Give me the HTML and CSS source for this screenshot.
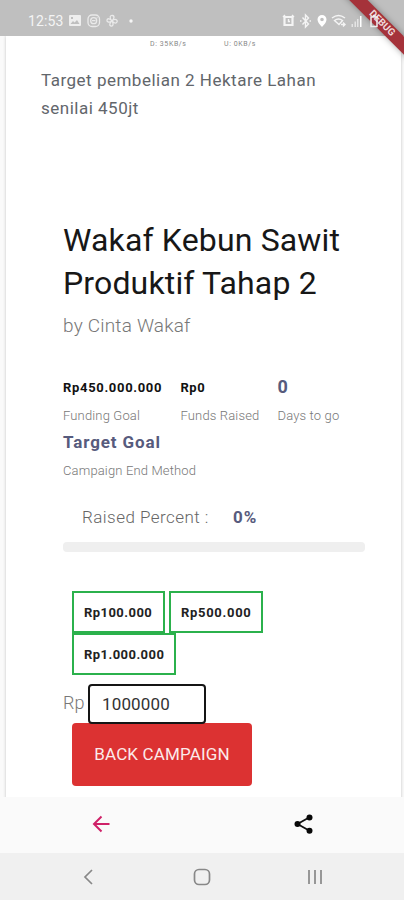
FILE: index.html
```html
<!DOCTYPE html>
<html lang="id">
<head>
<meta charset="utf-8">
<title>Wakaf Kebun Sawit Produktif Tahap 2</title>
<link rel="stylesheet" href="styles.css">
</head>
<body>
<div class="phone">
  <header class="status">
    <span class="clock">12:53</span>
    <svg class="status-left" width="72" height="16" viewBox="0 0 72 16">
      <path fill="#eee" fill-rule="evenodd" d="M2 2h10q1 0 1 1v9q0 1-1 1H2q-1 0-1-1V3q0-1 1-1zm.5 9h9L9 7l-2.500 2.500L5 8zM3 4v2h2V4z"/>
      <g fill="none" stroke="#eaeaea" stroke-width="1.300">
        <rect x="20" y="2" width="11.500" height="11.500" rx="4"/><circle cx="25.700" cy="7.700" r="3"/><path d="M24 7.700h3.500M28.700 4.500h.8"/>
        <path d="M44 8c-3-3-2-6 .5-5.500S46 6 44 8c3-3 6-1 5 1s-3 1-5-1c2 3 1 5.500-1 5s-1.500-3 1-5c-3 2-5.500 1-5-1s3-1.500 5 1"/>
      </g>
      <circle cx="63" cy="8" r="1.700" fill="#f6f6f6"/>
    </svg>
    <svg class="status-right" width="104" height="16" viewBox="0 0 104 16">
      <g fill="none" stroke="#f4f4f4" stroke-width="1.400">
        <path stroke-width="2.200" d="M3.500 4h8v8h-8z"/><path d="M2 4l2-2M13 4l-2-2M7.500 6v2.500H9"/>
        <path d="M21.500 4.500l6 6.500-3 3V2l3 3-6 6.500M19 8h1.500M28.500 8h1.500"/>
        <path d="M51 5q6.500-5 13 0M53.500 7.500q4-3 8 0l-3.500 4zM60 11.500h4M62 9.500l2 2-2 2"/>
      </g>
      <path fill="#fff" fill-rule="evenodd" d="M41 2a4.500 4.500 0 0 0-4.500 4.500Q36.500 9.500 41 14q4.500-4.500 4.500-7.500A4.500 4.500 0 0 0 41 2zm0 2.700a1.800 1.800 0 1 1 0 3.600 1.800 1.800 0 0 1 0-3.600z"/>
      <path fill="#e4e4e4" d="M70.500 11H72v3h-1.500zM73.500 8.500H75V14h-1.500zM76 6h1.500v8H76z"/><path fill="#fff" d="M79 3h1.500v11H79z"/>
      <path fill="none" stroke="#eee" stroke-width="1.500" d="M90 4h6v9.500h-6zM92 2.500h2.500"/>
    </svg>
    <div class="debug">DEBUG</div>
  </header>
  <main class="page">
    <article class="card">
      <div class="speeds"><span class="speed">D: 35KB/s</span><span class="speed up">U: 0KB/s</span></div>
      <p class="target"><span class="t1">Target pembelian 2 Hektare Lahan</span><br><span class="t2">senilai 450jt</span></p>
      <section class="campaign">
        <h1>Wakaf Kebun Sawit<br>Produktif Tahap 2</h1>
        <p class="by">by Cinta Wakaf</p>
        <div class="stats">
          <div class="stat"><b class="money goal">Rp450.000.000</b><span class="label">Funding Goal</span></div>
          <div class="stat"><b class="money">Rp0</b><span class="label">Funds Raised</span></div>
          <div class="stat"><b class="big zero">0</b><span class="label">Days to go</span></div>
          <div class="stat wide"><b class="big">Target Goal</b><span class="label">Campaign End Method</span></div>
        </div>
        <div class="raised"><span class="rp">Raised Percent :</span><b>0%</b></div>
        <div class="track"></div>
        <div class="amounts">
          <button class="a1">Rp100.000</button><button class="a2">Rp500.000</button><button class="a3">Rp1.000.000</button>
        </div>
        <div class="entry"><span>Rp</span><div class="field">1000000</div></div>
        <button class="back">BACK CAMPAIGN</button>
      </section>
    </article>
  </main>
  <nav class="tools">
    <svg width="20" height="20" viewBox="0 0 20 20"><path d="M18.500 10h-15M10.500 2.500L3 10l7.500 7.500" fill="none" stroke="#cf2168" stroke-width="2"/></svg>
    <svg width="20" height="20" viewBox="0 0 20 20"><path d="M16.500 3.200L4.500 10l12 6.800" fill="none" stroke="#111" stroke-width="1.800"/><g fill="#080808"><circle cx="4.500" cy="10" r="3"/><circle cx="16.500" cy="3.500" r="3"/><circle cx="16.500" cy="16.700" r="3"/></g></svg>
  </nav>
  <nav class="system">
    <svg width="18" height="18" viewBox="0 0 18 18"><path d="M12 2L5 9l7 7"/></svg>
    <svg width="18" height="18" viewBox="0 0 18 18"><rect x="1.500" y="1.500" width="15" height="15" rx="4.500"/></svg>
    <svg width="18" height="18" viewBox="0 0 18 18"><path d="M3 2v14M9 2v14M15 2v14"/></svg>
  </nav>
</div>
</body>
</html>
```
FILE: styles.css
```css
* { box-sizing: border-box; }
body { margin: 0; font-family: Roboto, sans-serif; background: #fff; }
h1, p { margin: 0; font-weight: 400; }
.phone { width: 404px; height: 900px; overflow: hidden; display: flex; flex-direction: column; }
.status { position: relative; flex: none; height: 36px; background: #bfbfbf; display: flex; align-items: center; padding: 6px 0 0 28px; z-index: 2; }
.clock { color: #f4f4f4; font-size: 14px; width: 40px; letter-spacing: 0.1px; }
.status-left { display: block; flex: none; }
.status-right { display: block; flex: none; margin-left: 141px; position: relative; z-index: 1; }
.debug { position: absolute; left: 332px; top: 17px; width: 100px; height: 12.500px; transform: rotate(45deg); background: #a5323a; box-shadow: 0 0 6px rgba(0,0,0,.35); color: #f0dada; font-size: 10px; font-weight: 700; line-height: 12.500px; text-align: center; }
.page { flex: none; height: 761px; overflow: hidden; background: #fafafa; padding: 0 3px 0 6px; }
.card { height: 780px; background: #fff; box-shadow: 0 0 3px rgba(0,0,0,.22); padding-left: 35px; }
.speeds { display: flex; padding-left: 109px; height: 30px; }
.speed { width: 74px; font-size: 7px; line-height: 16px; color: #888; letter-spacing: 0.6px; }
.target { height: 153px; font-size: 17px; line-height: 28px; color: #62666b; }
.t1 { letter-spacing: 0.5px; }
.t2 { letter-spacing: 0.5px; }
.campaign { margin-left: 22px; width: 302px; }
h1 { font-size: 32px; line-height: 43px; color: #171717; height: 86px; white-space: nowrap; letter-spacing: 0.15px; }
.by { font-size: 19px; font-weight: 300; line-height: 42px; height: 66px; color: #777; letter-spacing: 0.2px; }
.stats { display: grid; grid-template-columns: 117.500px 97px 87px; grid-template-rows: 55px 56px; }
.stat { display: flex; flex-direction: column; white-space: nowrap; }
.stat b { height: 31px; line-height: 32px; }
.wide { grid-column: 1 / 4; }
.stat .money { font-size: 13px; font-weight: 700; line-height: 34px; color: #111; letter-spacing: 0.5px; }
.stat .goal { letter-spacing: 0.68px; }
.big { font-size: 17px; color: #575b7d; letter-spacing: 0.9px; }
.stat .zero { font-size: 18px; line-height: 32px; }
.label { font-size: 13px; font-weight: 300; line-height: 28px; color: #777; letter-spacing: 0.15px; }
.raised { display: flex; height: 60px; line-height: 36px; padding: 17px 0 0 19px; font-size: 17px; color: #575b7d; }
.raised b { letter-spacing: 0.9px; }
.rp { width: 151px; font-weight: 300; color: #666; letter-spacing: 0.45px; }
.track { height: 10px; border-radius: 4px; background: #efefef; }
.amounts { display: flex; flex-wrap: wrap; column-gap: 4px; margin: 39px 0 0 9px; height: 84px; }
button { font-family: inherit; padding: 0; }
.amounts button { height: 42px; padding: 1px 0 0 10px; border: 2px solid #2bb14c; background: #fff; font-size: 13px; font-weight: 700; color: #222; letter-spacing: 0.45px; text-align: left; }
.amounts .a2 { width: 94px; letter-spacing: 0.7px; }
.a1 { width: 93px; }
.a3 { width: 104px; }
.entry { display: flex; height: 48px; padding-top: 9px; line-height: 38px; font-size: 18px; font-weight: 300; color: #777; }
.entry span { width: 25px; }
.field { width: 118px; height: 40px; border: 2px solid #151515; border-radius: 4px; padding-left: 12px; line-height: 36px; font-size: 17px; font-weight: 400; color: #333; letter-spacing: 0.15px; }
.back { display: block; margin-left: 9px; width: 180px; height: 63px; border: 0; border-radius: 4px; background: #dc3232; color: #fbeaea; font-size: 17px; letter-spacing: 0.15px; padding-bottom: 1px; }
.tools { flex: none; height: 56px; background: #fafafa; display: grid; grid-template-columns: 1fr 1fr; place-items: center; padding-bottom: 2px; }
.system { flex: none; height: 47px; background: #f0f0f0; display: grid; grid-template-columns: repeat(3, 1fr); place-items: center; padding: 0 32px; }
.system svg { fill: none; stroke: #888; stroke-width: 1.700; }
```
